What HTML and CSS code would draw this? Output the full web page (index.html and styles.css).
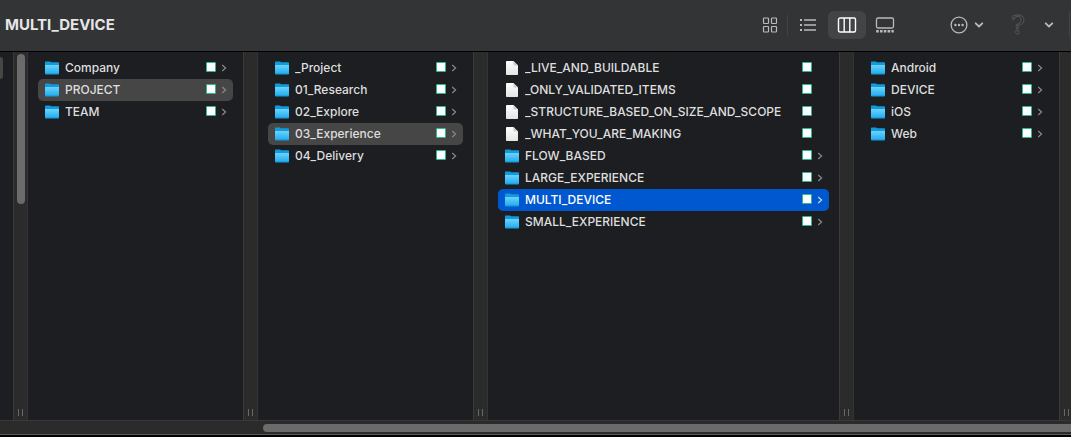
FILE: index.html
```html
<!DOCTYPE html>
<html lang="en">
<head>
<meta charset="utf-8">
<title>MULTI_DEVICE</title>
<link rel="stylesheet" href="styles.css">
</head>
<body>
<svg class="defs" aria-hidden="true">
  <defs>
    <linearGradient id="blue" x1="0" y1="0" x2="0" y2="1"><stop offset="0" stop-color="#6ad3fe"/><stop offset="1" stop-color="#27aeee"/></linearGradient>
    <linearGradient id="paper" x1="0" y1="0" x2="0" y2="1"><stop offset="0" stop-color="#fff"/><stop offset="1" stop-color="#e4e4e4"/></linearGradient>
    <symbol id="folder" viewBox="0 0 14 14"><path d="M0 1Q0 .4.6.4H4.6Q5.2.4 5.6.8L6 1.2H13.2Q14 1.2 14 2V12.8Q14 13.4 13.2 13.4H.8Q0 13.4 0 12.8Z" fill="#119bdc"/><path d="M0 4H14V12.4H0Z" fill="url(#blue)"/></symbol>
    <symbol id="file" viewBox="0 0 14 14"><path d="M1 .8Q1 0 1.8 0H8.4L13 4.6V13.2Q13 14 12.2 14H1.8Q1 14 1 13.2Z" fill="url(#paper)"/><path d="M8.4 0L13 4.6H9.2Q8.4 4.6 8.4 3.8Z" fill="#d0d0d0"/></symbol>
    <symbol id="arrow" viewBox="0 0 6 8"><path d="M1.2 1L4.6 4L1.2 7" fill="none" stroke="currentColor" stroke-width="1.2"/></symbol>
    <symbol id="down" viewBox="0 0 10 8"><path d="M1.7 2.3L5 5.5L8.3 2.3" fill="none" stroke="currentColor" stroke-width="1.8" stroke-linecap="round" stroke-linejoin="round"/></symbol>
  </defs>
</svg>
<main class="window">
  <header class="toolbar">
    <h1 class="title">MULTI_DEVICE</h1>
    <div class="views">
      <button class="view grid-view" aria-label="Icons"><svg width="16" height="16" viewBox="0 0 16 16" fill="none" stroke="currentColor" stroke-width="1.2"><rect x="1.5" y="1" width="5" height="5.5" rx=".7"/><rect x="9.5" y="1" width="5" height="5.5" rx=".7"/><rect x="1.5" y="9.5" width="5" height="5.5" rx=".7"/><rect x="9.5" y="9.5" width="5" height="5.5" rx=".7"/></svg></button>
      <button class="view list-view" aria-label="List"><svg width="18" height="14" viewBox="0 0 18 14" fill="none" stroke="currentColor" stroke-width="1.3"><path d="M5 2H17M5 7H17M5 12H17"/><path stroke-width="2" d="M1 2H3M1 7H3M1 12H3"/></svg></button>
      <button class="view selected-view" aria-label="Columns" aria-pressed="true"><svg width="20" height="16" viewBox="0 0 20 16" fill="none" stroke="currentColor" stroke-width="1.4"><rect x="1.5" y="1" width="17" height="14" rx="1.5"/><path d="M7.2 1V15M12.8 1V15"/></svg></button>
      <button class="view" aria-label="Gallery"><svg width="20" height="16" viewBox="0 0 20 16" fill="none" stroke="currentColor" stroke-width="1.3"><rect x="1.5" y="1" width="17" height="10" rx="1.5"/><path stroke-width="2.4" stroke-dasharray="2.6 1.2" d="M1.2 14.2H18.8"/></svg></button>
    </div>
    <button class="more" aria-label="Actions"><svg width="18" height="18" viewBox="0 0 18 18"><circle cx="9" cy="9" r="7.9" fill="none" stroke="currentColor" stroke-width="1.3"/><g fill="currentColor"><circle cx="5.4" cy="9" r="1.2"/><circle cx="9" cy="9" r="1.2"/><circle cx="12.6" cy="9" r="1.2"/></g></svg><svg width="10" height="8"><use href="#down"/></svg></button>
    <button class="help" aria-label="Help"><span class="question">?</span><svg width="10" height="8"><use href="#down"/></svg></button>
    <div class="edge"></div>
  </header>
  <div class="columns" id="columns"></div>
  <div class="hscroll"><div class="hthumb"></div></div>
</main>
<script src="script.js"></script>
</body>
</html>
```
FILE: styles.css
```css
* { box-sizing: border-box; }
body { margin: 0; background: #000; color: #dededf; font: 500 12px/22px Inter, "Liberation Sans", sans-serif; }
button { margin: 0; padding: 0; border: 0; background: none; color: inherit; font: inherit; }
svg { display: block; flex: none; }
.defs { position: absolute; width: 0; height: 0; }
.window { display: flex; flex-direction: column; height: 100vh; padding-bottom: 2px; overflow: hidden; }
.toolbar { display: flex; align-items: center; flex: none; height: 52px; padding: 0 0 2px 5px; background: #333436; border-bottom: 1px solid #000; color: #b9babb; }
.title { flex: 1; margin: 0; color: #e6e6e7; font-size: 15px; font-weight: 700; }
.views { display: flex; align-items: center; margin-right: 46px; }
.view { display: grid; place-items: center; width: 38px; height: 28px; border-radius: 6px; }
.grid-view { width: 35px; }
.list-view { width: 41px; position: relative; }
.list-view::before { content: ""; position: absolute; left: 0; top: 4px; width: 1px; height: 20px; background: #434446; }
.selected-view { background: #434446; color: #fff; }
.more { display: flex; align-items: center; gap: 6px; margin-right: 25px; }
.help { display: flex; align-items: center; gap: 17px; margin-right: 15px; }
.question { width: 18px; font: 26px/28px "DejaVu Serif", serif; color: #2a2b2c; -webkit-text-stroke: 1px #545557; text-align: center; }
.edge { width: 2px; height: 28px; border-left: 1px solid #434446; border-radius: 2px 0 0 2px; }
.columns { display: grid; flex: 1; min-height: 0; grid-template-columns: 28px 230fr 230fr 366fr 217fr; }
.column { display: flex; min-width: 0; background: #1d1e21; }
.list { flex: 1; min-width: 0; margin: 0; padding: 5px 10px; list-style: none; }
.row { display: flex; align-items: center; width: 100%; height: 22px; padding: 0 6px 0 7px; border-radius: 5px; text-align: left; }
.name { flex: 1; min-width: 0; margin-left: 6px; overflow: hidden; white-space: nowrap; }
.tag { flex: none; width: 10px; height: 10px; margin: 0 5px 2px 0; background: #fff; border: 1px solid #35b58b; border-radius: 1px; }
.arrow { width: 6px; height: 8px; color: #88898b; }
.current { background: #464646; }
.active { background: #0058d0; color: #fff; }
.active .arrow { color: #c5d9f5; }
.track { display: flex; flex: none; flex-direction: column; justify-content: space-between; width: 15px; background: #2b2b2b; border-left: 1px solid #3a3a3a; border-right: 1px solid #343434; }
.column:last-child .track { width: 12px; border-right: 0; }
.thumb { width: 8px; height: 150px; margin: 2px 0 0 3px; border-radius: 4px; background: #6b6b6b; }
.grip { width: 5px; height: 7px; margin: auto 0 4px 4px; border: solid #686868; border-width: 0 1px; }
.parent { flex: 1; padding-top: 5px; }
.parent-row { width: 3px; height: 22px; border-radius: 0 5px 5px 0; background: #464646; }
.hscroll { flex: none; height: 15px; padding: 3px 0 0; background: #2b2b2b; border-top: 1px solid #383838; border-bottom: 1px solid #5c5c5c; }
.hthumb { height: 8px; margin-left: 263px; border-radius: 4px 0 0 4px; background: #6b6b6b; }
```
FILE: script.js
```js
const columns = [
  { folders: ["Company", "PROJECT", "TEAM"], current: "PROJECT" },
  { folders: ["_Project", "01_Research", "02_Explore", "03_Experience", "04_Delivery"], current: "03_Experience" },
  { files: ["_LIVE_AND_BUILDABLE", "_ONLY_VALIDATED_ITEMS", "_STRUCTURE_BASED_ON_SIZE_AND_SCOPE", "_WHAT_YOU_ARE_MAKING"],
    folders: ["FLOW_BASED", "LARGE_EXPERIENCE", "MULTI_DEVICE", "SMALL_EXPERIENCE"], active: "MULTI_DEVICE" },
  { folders: ["Android", "DEVICE", "iOS", "Web"] }
];

function row(name, kind, column) {
  const state = name === column.current ? " current" : name === column.active ? " active" : "";
  const arrow = kind === "folder" ? '<use href="#arrow"/>' : "";
  return `<li><button class="row${state}"><svg width="14" height="14"><use href="#${kind}"/></svg>` +
    `<span class="name">${name}</span><span class="tag"></span><svg class="arrow">${arrow}</svg></button></li>`;
}

const parent = '<div class="column"><div class="parent"><div class="parent-row"></div></div>' +
  '<div class="track"><div class="thumb"></div><div class="grip"></div></div></div>';

document.getElementById("columns").innerHTML = parent + columns.map(c =>
  '<section class="column"><ul class="list">' +
  (c.files || []).map(n => row(n, "file", c)).join("") +
  c.folders.map(n => row(n, "folder", c)).join("") +
  '</ul><div class="track"><div class="grip"></div></div></section>').join("");
```
